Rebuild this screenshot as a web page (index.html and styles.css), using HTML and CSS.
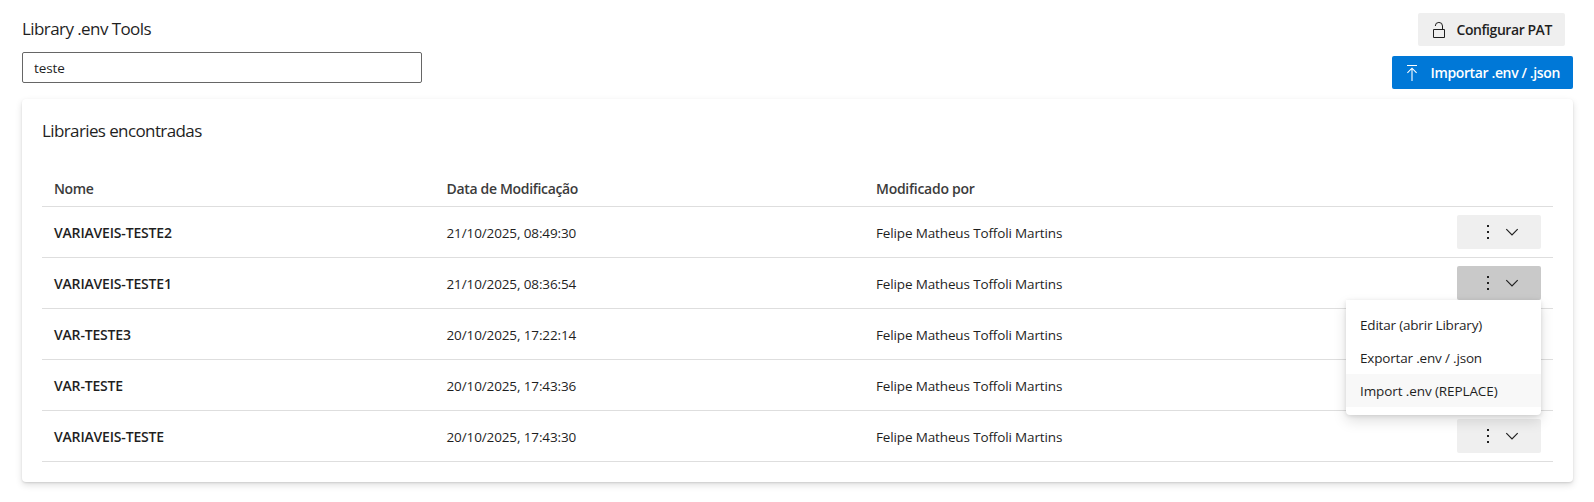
FILE: index.html
```html
<!DOCTYPE html>
<html lang="pt-BR">
<head>
<meta charset="utf-8">
<title>Library .env Tools</title>
<link rel="stylesheet" href="styles.css">
</head>
<body>
<svg width="0" height="0" class="sprite" aria-hidden="true">
  <symbol id="more" viewBox="0 0 16 16"><path d="M7 1h2v2H7zM7 7h2v2H7zM7 13h2v2H7z" fill="currentColor"/></symbol>
  <symbol id="chevron" viewBox="0 0 14 14"><path d="M1.3 4.2 7 9.900l5.700-5.700" fill="none" stroke="currentColor" stroke-width="1.2"/></symbol>
</svg>
<main class="page">
  <header class="top">
    <div class="search">
      <h1 class="title title-page">Library .env Tools</h1>
      <input class="field" type="text" value="teste" aria-label="Buscar">
    </div>
    <div class="commands">
      <button class="btn btn-config">
        <svg class="icon" viewBox="0 0 16 16"><path d="M3.500 8.500h11v8h-11zM5.300 5A3.600 3.600 0 0 1 12.500 5v3.500" fill="none" stroke="currentColor"/></svg>
        <span class="t-config">Configurar PAT</span>
      </button>
      <button class="btn btn-import">
        <svg class="icon" viewBox="0 0 16 16"><path d="M3 1.500h10M8 17V4.300M3.400 8.800 8 4.200l4.600 4.600" fill="none" stroke="currentColor" stroke-width="1.100"/></svg>
        <span class="t-import">Importar .env / .json</span>
      </button>
    </div>
  </header>
  <section class="card">
    <h2 class="title title-card">Libraries encontradas</h2>
    <div class="table">
      <div class="row head"><span class="h-name">Nome</span><span class="h-date">Data de Modificação</span><span class="h-author">Modificado por</span></div>
      <div class="row"><span class="name">VARIAVEIS-TESTE2</span><span class="date">21/10/2025, 08:49:30</span><span class="author">Felipe Matheus Toffoli Martins</span><button class="action"><svg class="more"><use href="#more"/></svg><svg class="chevron"><use href="#chevron"/></svg></button></div>
      <div class="row"><span class="name">VARIAVEIS-TESTE1</span><span class="date">21/10/2025, 08:36:54</span><span class="author">Felipe Matheus Toffoli Martins</span>
        <div class="dropdown">
          <button class="action open"><svg class="more"><use href="#more"/></svg><svg class="chevron"><use href="#chevron"/></svg></button>
          <div class="menu">
            <div class="item i-edit">Editar (abrir Library)</div>
            <div class="item i-export">Exportar .env / .json</div>
            <div class="item i-replace hover">Import .env (REPLACE)</div>
          </div>
        </div>
      </div>
      <div class="row"><span class="name">VAR-TESTE3</span><span class="date">20/10/2025, 17:22:14</span><span class="author">Felipe Matheus Toffoli Martins</span></div>
      <div class="row"><span class="name">VAR-TESTE</span><span class="date">20/10/2025, 17:43:36</span><span class="author">Felipe Matheus Toffoli Martins</span></div>
      <div class="row"><span class="name">VARIAVEIS-TESTE</span><span class="date">20/10/2025, 17:43:30</span><span class="author">Felipe Matheus Toffoli Martins</span><button class="action"><svg class="more"><use href="#more"/></svg><svg class="chevron"><use href="#chevron"/></svg></button></div>
    </div>
  </section>
</main>
</body>
</html>
```

FILE: styles.css
```css
* { box-sizing: border-box; }
body { margin: 0; background: #fff; color: #1f1f1f; font: 14px/20px "Segoe UI", "Open Sans", "Noto Sans", sans-serif; white-space: nowrap; }
button, input { font: inherit; color: inherit; }
.sprite { position: absolute; }
.page { height: 502px; padding: 13px 21px 0 22px; }
.top { display: flex; justify-content: space-between; height: 86px; }
.title { margin: 0; font-size: 17px; font-weight: 400; line-height: 24px; }
.title-page { padding-top: 4px; height: 39px; letter-spacing: -0.580px; }
.title-card { letter-spacing: -0.610px; }
.field { display: block; width: 400px; height: 31px; padding: 1px 11px 0; border: 1px solid #666; border-radius: 2px; outline: 0; font-size: 13.500px; letter-spacing: -0.1px; }
.commands { display: flex; flex-direction: column; align-items: flex-end; gap: 10px; }
.btn { display: flex; align-items: center; height: 33px; padding: 0 12px; border: 0; border-radius: 2px; font-weight: 600; }
.btn span { padding-top: 1px; }
.btn-config { width: 147px; margin-right: 8px; background: #efefef; }
.btn-import { width: 181px; background: #0078d7; color: #fff; }
.t-config { letter-spacing: -0.440px; }
.t-import { letter-spacing: -0.370px; }
.icon { flex: none; width: 16px; height: 16px; margin: 0 10.500px 1px 0; overflow: visible; }
.card { height: 383px; padding: 20px 20px; border-radius: 4px; background: #fff; box-shadow: 0 3px 7px rgba(0,0,0,.13), 0 1px 2px rgba(0,0,0,.11); }
.table { padding-top: 28px; }
.row { display: grid; grid-template-columns: 392.500px 429.500px 1fr 84px; align-items: center; height: 51px; padding: 0 12px; border-bottom: 1px solid #dedede; }
.row.head { height: 36px; font-weight: 600; color: #3b3b3b; }
.row > span { justify-self: start; padding-top: 2px; }
.row.head > span { padding-top: 0; }
.head > .h-name { letter-spacing: -0.400px; }
.head > .h-date { letter-spacing: -0.330px; }
.head > .h-author { letter-spacing: -0.270px; }
.name { font-weight: 600; letter-spacing: -0.180px; }
.date, .author, .item { font-size: 13.500px; }
.date { letter-spacing: -0.120px; }
.author { letter-spacing: -0.140px; }
.action { grid-column: 4; display: flex; align-items: center; width: 84px; height: 34px; padding: 0 0 0 23px; border: 0; border-radius: 2px; background: #efefef; }
.action.open { background: #c9c9c9; }
.more { width: 16px; height: 16px; }
.chevron { width: 14px; height: 14px; margin-left: 9px; }
.dropdown { grid-column: 4; position: relative; }
.menu { position: absolute; z-index: 2; top: 34px; right: 0; width: 195px; height: 115px; padding: 8px 0; border-radius: 0 0 4px 4px; background: #fff; box-shadow: 0 6px 14px rgba(0,0,0,.13), 0 1px 4px rgba(0,0,0,.11); }
.item { height: 33px; padding: 1px 14px 0; line-height: 33px; }
.i-edit { letter-spacing: -0.190px; }
.i-export { letter-spacing: -0.180px; }
.i-replace { letter-spacing: -0.100px; }
.item.hover { background: #f8f8f8; }
```
